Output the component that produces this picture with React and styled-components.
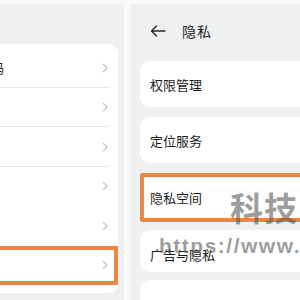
import React from "react";
import styled, { createGlobalStyle } from "styled-components";

const GlobalStyle = createGlobalStyle`
  html, body {
    margin: 0;
    padding: 0;
    background: #f8f9fa;
  }
  body {
    font-family: "Noto Sans CJK SC", "Noto Sans", sans-serif;
  }
`;

const ORANGE = "#ea8640";

const Screen = styled.div`
  position: relative;
  width: 300px;
  height: 300px;
  box-sizing: border-box;
  padding-top: 4px;
  display: flex;
  gap: 6px;
  overflow: hidden;
  background: #f8f9fa;
`;

const Panel = styled.div`
  flex: 0 0 ${(p) => p.$width}px;
  display: flex;
  flex-direction: column;
  background: #eff0f2;
  overflow: hidden;
`;

/* left screen: main settings list, scrolled so only its right edge shows */
const TopSpace = styled.div`
  flex: 0 0 40px;
`;

const ListCard = styled.div`
  margin-left: -103px;
  width: 221px;
  padding: 4px 0 8px;
  background: #fff;
  border-radius: 10px;
`;

const Row = styled.div`
  position: relative;
  height: 39.5px;
  box-sizing: border-box;
  display: flex;
  align-items: center;
  justify-content: space-between;
  padding: 0 10px 0 16px;
  outline: ${(p) => (p.$highlight ? `4px solid ${ORANGE}` : "none")};
  outline-offset: -4px;

  &::after {
    content: "";
    display: ${(p) => (p.$divider ? "block" : "none")};
    position: absolute;
    left: 16px;
    right: 8px;
    bottom: 0;
    height: 1px;
    background: #e7e7e9;
  }
`;

const Label = styled.span`
  font-size: 13px;
  color: #1b1b1b;
  white-space: nowrap;
`;

const Chevron = () => (
  <svg width="6" height="10" viewBox="0 0 6 10">
    <path d="M1 1 L5 5 L1 9" fill="none" stroke="#c2c2c4" strokeWidth="1.2" />
  </svg>
);

/* right screen: privacy page */
const Header = styled.div`
  flex: 0 0 54px;
  display: flex;
  align-items: center;
  gap: 16px;
  padding-left: 20px;
`;

const Title = styled.span`
  font-size: 14px;
  letter-spacing: 1px;
  color: #222;
`;

const CardList = styled.div`
  display: flex;
  flex-direction: column;
  padding-top: 3px;
`;

const Card = styled.div`
  flex: 0 0 auto;
  height: ${(p) => p.$h}px;
  margin: 0 0 ${(p) => p.$gap}px 10px;
  width: 200px;
  box-sizing: border-box;
  display: flex;
  align-items: center;
  padding: ${(p) => (p.$highlight ? "0 0 0 6px" : `${p.$shift || 0}px 0 0 10px`)};
  background: #fff;
  border: ${(p) => (p.$highlight ? `4px solid ${ORANGE}` : "none")};
  border-radius: ${(p) => (p.$highlight ? "2px" : "10px 0 0 10px")};
`;

const BigMark = styled.span`
  position: absolute;
  left: 230px;
  top: 191px;
  font-family: "Noto Sans CJK SC", sans-serif;
  font-weight: 700;
  font-size: 33px;
  line-height: 1;
  letter-spacing: 1px;
  color: rgba(90, 90, 90, 0.6);
  pointer-events: none;
`;

const UrlMark = styled.span`
  position: absolute;
  left: 159px;
  top: 235px;
  font-family: "Liberation Sans", Arial, sans-serif;
  font-weight: 700;
  font-size: 21px;
  line-height: 1;
  letter-spacing: 1.5px;
  color: rgba(90, 90, 90, 0.6);
  white-space: nowrap;
  pointer-events: none;
`;

const mainRows = ["生物识别和密码", "应用和服务", "电池", "存储", "安全", "隐私"];

const privacyCards = [
  { label: "权限管理", h: 46, gap: 10 },
  { label: "定位服务", h: 46, gap: 10 },
  { label: "隐私空间", h: 49, gap: 8, highlight: true },
  { label: "广告与隐私", h: 42, gap: 8, shift: 6 },
  { label: "", h: 40, gap: 0 },
];

const App = () => {
  return (
    <>
      <GlobalStyle />
      <Screen>
        <Panel $width={124}>
          <TopSpace />
          <ListCard>
            {mainRows.map((r, i) => (
              <Row key={r} $divider={i < 3} $highlight={i === mainRows.length - 1}>
                <Label>{r}</Label>
                <Chevron />
              </Row>
            ))}
          </ListCard>
        </Panel>

        <Panel $width={170}>
          <Header>
            <svg width="16" height="12" viewBox="0 0 16 12">
              <path
                d="M15 6 H1.5 M6.5 1 L1.5 6 L6.5 11"
                fill="none"
                stroke="#2a2a2a"
                strokeWidth="1.4"
                strokeLinecap="round"
                strokeLinejoin="round"
              />
            </svg>
            <Title>隐私</Title>
          </Header>
          <CardList>
            {privacyCards.map((c, i) => (
              <Card key={i} $h={c.h} $gap={c.gap} $highlight={c.highlight} $shift={c.shift}>
                <Label>{c.label}</Label>
              </Card>
            ))}
          </CardList>
        </Panel>

        <BigMark>科技</BigMark>
        <UrlMark>https://www.</UrlMark>
      </Screen>
    </>
  );
};

export default App;
